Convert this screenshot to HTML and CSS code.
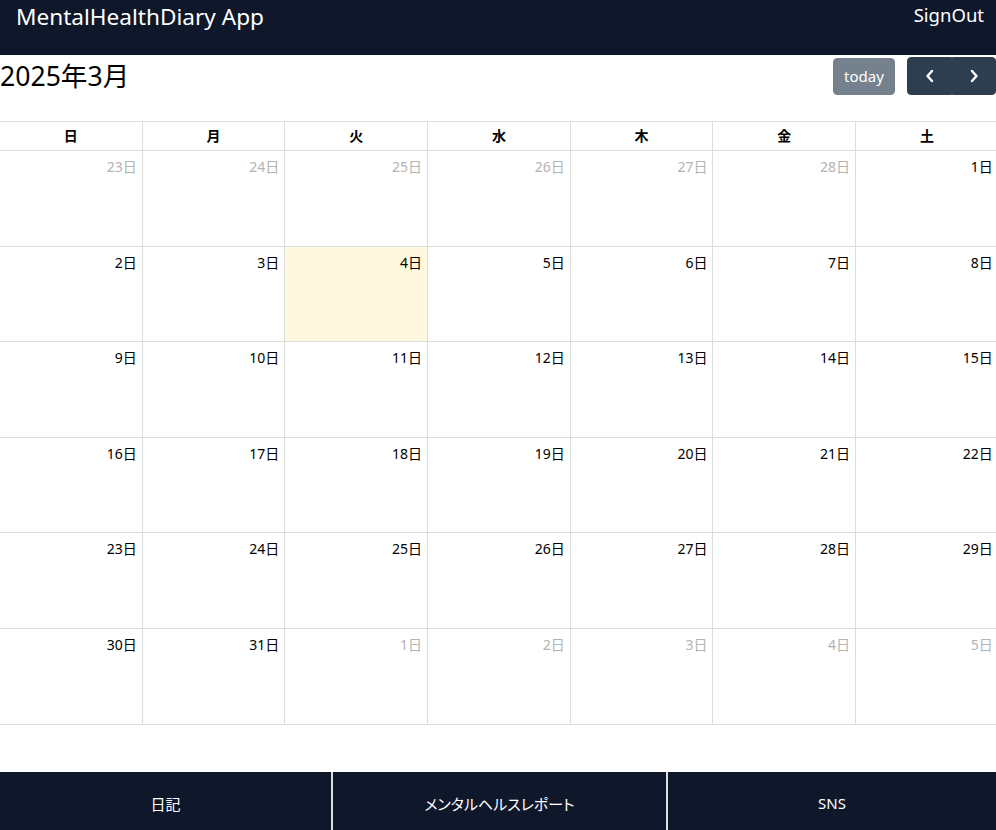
FILE: index.html
```html
<!DOCTYPE html>
<html lang="ja">
<head>
<meta charset="utf-8">
<title>MentalHealthDiary App</title>
<link rel="stylesheet" href="styles.css">
</head>
<body>
<div class="app">
  <header class="topbar">
    <h1 class="brand">MentalHealthDiary App</h1>
    <a class="signout" href="#">SignOut</a>
  </header>
  <main class="main">
    <div class="toolbar">
      <h2 class="title">2025年3月</h2>
      <div class="tools">
        <button class="btn btn-today" disabled>today</button>
        <div class="btn-group">
          <button class="btn btn-nav" aria-label="prev">
            <svg width="12" height="14" viewBox="0 0 12 14"><path d="M8 2 L3.5 7 L8 12" fill="none" stroke="#fff" stroke-width="2.4" stroke-linecap="round" stroke-linejoin="round"/></svg>
          </button>
          <button class="btn btn-nav" aria-label="next">
            <svg width="12" height="14" viewBox="0 0 12 14"><path d="M4 2 L8.5 7 L4 12" fill="none" stroke="#fff" stroke-width="2.4" stroke-linecap="round" stroke-linejoin="round"/></svg>
          </button>
        </div>
      </div>
    </div>
    <div class="calendar">
      <div class="dow">日</div><div class="dow">月</div><div class="dow">火</div><div class="dow">水</div><div class="dow">木</div><div class="dow">金</div><div class="dow">土</div>

      <div class="day other">23日</div><div class="day other">24日</div><div class="day other">25日</div><div class="day other">26日</div><div class="day other">27日</div><div class="day other">28日</div><div class="day">1日</div>

      <div class="day">2日</div><div class="day">3日</div><div class="day today">4日</div><div class="day">5日</div><div class="day">6日</div><div class="day">7日</div><div class="day">8日</div>

      <div class="day">9日</div><div class="day">10日</div><div class="day">11日</div><div class="day">12日</div><div class="day">13日</div><div class="day">14日</div><div class="day">15日</div>

      <div class="day">16日</div><div class="day">17日</div><div class="day">18日</div><div class="day">19日</div><div class="day">20日</div><div class="day">21日</div><div class="day">22日</div>

      <div class="day">23日</div><div class="day">24日</div><div class="day">25日</div><div class="day">26日</div><div class="day">27日</div><div class="day">28日</div><div class="day">29日</div>

      <div class="day">30日</div><div class="day">31日</div><div class="day other">1日</div><div class="day other">2日</div><div class="day other">3日</div><div class="day other">4日</div><div class="day other">5日</div>
    </div>
  </main>
  <nav class="bottomnav">
    <a class="navitem" href="#">日記</a>
    <a class="navitem" href="#">メンタルヘルスレポート</a>
    <a class="navitem" href="#">SNS</a>
  </nav>
</div>
</body>
</html>
```

FILE: styles.css
```css
* { box-sizing: border-box; }
html, body {
  margin: 0;
  padding: 0;
  height: 100%;
}
body {
  font-family: "Noto Sans", "Noto Sans CJK JP", sans-serif;
  font-size: 16px;
  color: #000;
  background: #fff;
}
.app {
  height: 830px;
  display: flex;
  flex-direction: column;
  overflow: hidden;
}
.topbar {
  height: 55px;
  flex: none;
  background: #0f172a;
  color: #fff;
  display: flex;
  justify-content: space-between;
  align-items: flex-start;
  padding: 0 12px 0 16px;
}
.brand {
  margin: 0;
  font-size: 22.6px;
  font-weight: 400;
  line-height: 34px;
}
.signout {
  color: #fff;
  text-decoration: none;
  font-size: 18.5px;
  line-height: 30px;
}
.main {
  flex: 1;
  overflow: hidden;
}
.toolbar {
  display: flex;
  justify-content: space-between;
  align-items: center;
  padding-top: 2px;
  height: 66px;
  padding-bottom: 26px;
}
.title {
  margin: 0;
  font-size: 26.6px;
  font-weight: 400;
  line-height: 38px;
}
.tools {
  display: flex;
  align-items: center;
  gap: 12px;
}
.btn {
  font-family: inherit;
  border: 1px solid #2c3e50;
  background: #2c3e50;
  color: #fff;
  font-size: 15px;
  height: 38px;
  padding: 0 10px;
  border-radius: 4px;
  display: flex;
  align-items: center;
  justify-content: center;
}
.btn-today {
  opacity: 0.65;
  width: 62px;
  height: 37px;
}
.btn-group {
  display: flex;
}
.btn-nav {
  width: 44px;
  padding: 0;
}
.btn-group .btn-nav:first-child {
  border-radius: 4px 0 0 4px;
  width: 45px;
}
.btn-group .btn-nav:last-child {
  border-radius: 0 4px 4px 0;
}
.calendar {
  display: grid;
  width: 999px;
  grid-template-columns: repeat(7, 142.7px);
  grid-template-rows: 29px repeat(6, 95.5px);
  border-top: 1px solid #ddd;
  border-bottom: 1px solid #ddd;
}
.dow, .day {
  border-right: 1px solid #ddd;
  border-bottom: 1px solid #ddd;
}
.calendar > :nth-last-child(-n+7) {
  border-bottom: none;
}
.dow {
  font-size: 14px;
  font-weight: 700;
  text-align: center;
  line-height: 28px;
}
.day {
  font-size: 14px;
  text-align: right;
  padding: 5px 5px 0 0;
  line-height: 21px;
}
.day.other {
  color: #b3b3b3;
}
.day.today {
  background: #fef8de;
}
.bottomnav {
  height: 58px;
  flex: none;
  display: grid;
  grid-template-columns: 331px 333px 1fr;
  gap: 2px;
  background: #dddddd;
}
.navitem {
  background: #0f172a;
  color: #fff;
  text-decoration: none;
  font-size: 15px;
  font-feature-settings: "palt";
  padding-top: 4px;
  display: flex;
  align-items: center;
  justify-content: center;
}
```
